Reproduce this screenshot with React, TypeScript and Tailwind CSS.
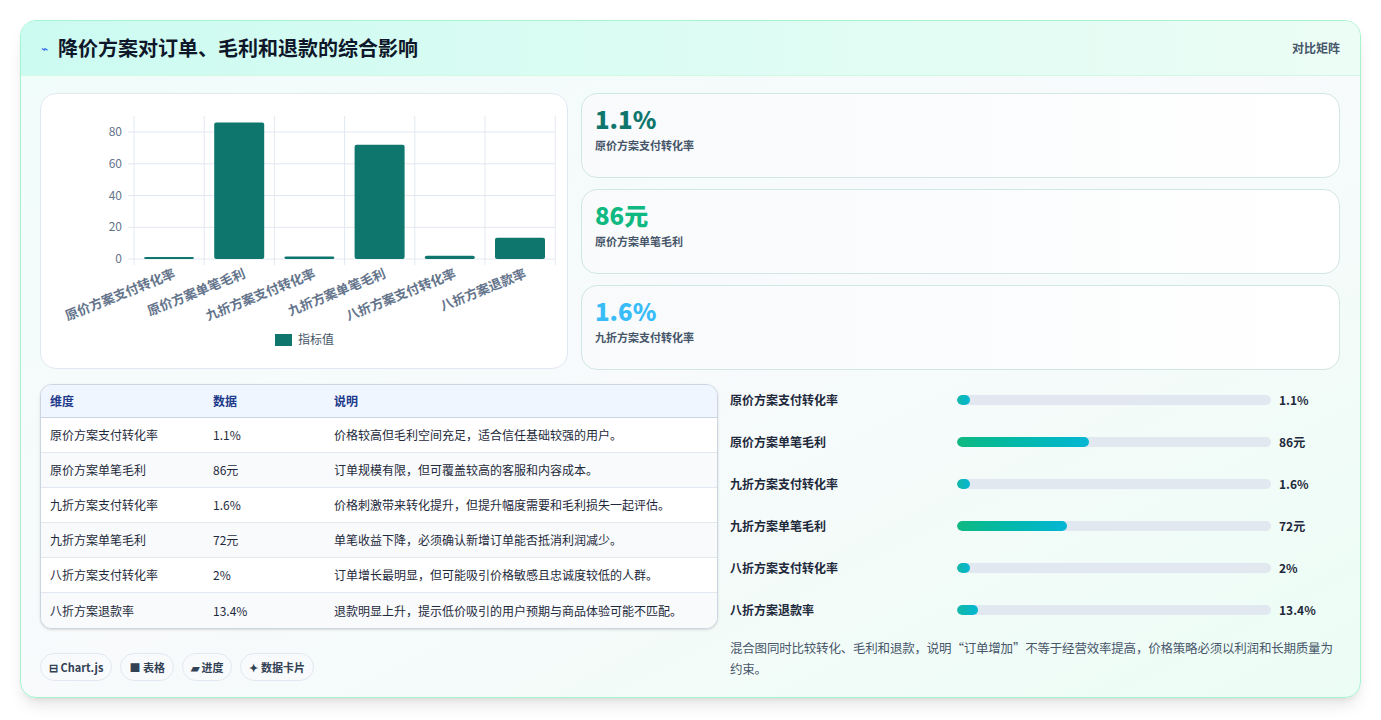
import React from "react";

const rows = [
  ["原价方案支付转化率", "1.1%", "价格较高但毛利空间充足，适合信任基础较强的用户。", 1.1],
  ["原价方案单笔毛利", "86元", "订单规模有限，但可覆盖较高的客服和内容成本。", 86],
  ["九折方案支付转化率", "1.6%", "价格刺激带来转化提升，但提升幅度需要和毛利损失一起评估。", 1.6],
  ["九折方案单笔毛利", "72元", "单笔收益下降，必须确认新增订单能否抵消利润减少。", 72],
  ["八折方案支付转化率", "2%", "订单增长最明显，但可能吸引价格敏感且忠诚度较低的人群。", 2],
  ["八折方案退款率", "13.4%", "退款明显上升，提示低价吸引的用户预期与商品体验可能不匹配。", 13.4],
] as const;

const font = { fontFamily: "'Noto Sans CJK SC', 'Noto Sans', sans-serif" };

function Chart() {
  const x0 = 93, y0 = 165, unit = 127 / 80, colW = 70.2;
  return (
    <svg width="527" height="275" viewBox="0 0 527 275" style={font}>
      {[0, 20, 40, 60, 80].map((v) => (
        <g key={v}>
          <line x1={x0 - 6} x2={514} y1={y0 - v * unit} y2={y0 - v * unit} stroke="#e2e8f0" />
          <text x={x0 - 12} y={y0 - v * unit + 4} textAnchor="end" fontSize="12" fill="#64748b">{v}</text>
        </g>
      ))}
      {Array.from({ length: 7 }).map((_, i) => (
        <line key={i} x1={x0 + i * colW} x2={x0 + i * colW} y1={22} y2={y0 + 6} stroke="#e2e8f0" />
      ))}
      {rows.map((r, i) => {
        const h = Math.max(r[3] * unit, 2);
        return (
          <g key={i}>
            <rect x={x0 + i * colW + 10} y={y0 - h} width={50} height={h} rx="2" fill="#0f766e" />
            <text transform={`translate(${x0 + i * colW + 42},${y0 + 18}) rotate(-22)`} textAnchor="end" fontSize="13" fontWeight="600" fill="#64748b">{r[0]}</text>
          </g>
        );
      })}
      <rect x="234" y="240" width="17" height="12" fill="#0f766e" />
      <text x="257" y="250" fontSize="12" fill="#475569">指标值</text>
    </svg>
  );
}

const stats = [
  ["1.1%", "原价方案支付转化率", "text-[#0f766e]"],
  ["86元", "原价方案单笔毛利", "text-[#10b981]"],
  ["1.6%", "九折方案支付转化率", "text-[#38bdf8]"],
];

export default function App() {
  return (
    <div className="min-h-[720px] bg-white p-5 pb-0" style={font}>
      <div className="rounded-2xl border border-[#a7f3d0] bg-gradient-to-br from-[#f0fdfa] via-[#f8fafc] to-[#ecfdf5] shadow-lg overflow-hidden h-[678px]">
        <div className="h-[55px] flex items-center justify-between px-5 bg-gradient-to-r from-[#ccfbf1] to-[#ecfdf5] border-b border-[#d1fae5]">
          <div className="flex items-center gap-[10px]">
            <span className="text-[#2563eb] text-xs">⌁</span>
            <span className="text-[20px] font-bold text-[#0f172a]">降价方案对订单、毛利和退款的综合影响</span>
          </div>
          <span className="text-xs font-semibold text-[#475569]">对比矩阵</span>
        </div>
        <div className="pl-[19px] pr-5 pt-[17px] flex gap-[13px]">
          <div className="w-[528px] h-[276px] rounded-2xl border border-[#e2e8f0] bg-white">
            <Chart />
          </div>
          <div className="flex-1 flex flex-col gap-[11px]">
            {stats.map((s) => (
              <div key={s[1]} className="h-[85px] rounded-2xl border border-[#d1e7e4] bg-gradient-to-r from-[#f8fafc] to-white px-[13px] pt-[9px]">
                <div className={`text-[24px] font-extrabold leading-8 ${s[2]}`}>{s[0]}</div>
                <div className="text-[11px] font-semibold text-[#475569] mt-[2px]">{s[1]}</div>
              </div>
            ))}
          </div>
        </div>
        <div className="pl-[19px] pr-5 pt-[14px] flex gap-[12px]">
          <div className="w-[678px]">
            <div className="rounded-xl border border-[#cbd5e1] overflow-hidden bg-white shadow-sm">
              <div className="grid grid-cols-[163px_121px_1fr] h-[33px] items-center bg-[#eff6ff] border-b border-[#cbd5e1] px-[9px] text-xs font-semibold text-[#1e3a8a]">
                <span>维度</span><span>数据</span><span>说明</span>
              </div>
              {rows.map((r, i) => (
                <div key={i} className={`grid grid-cols-[163px_121px_1fr] h-[35px] items-center px-[9px] text-xs text-[#1e293b] ${i < 5 ? "border-b border-[#e2e8f0]" : ""} ${i % 2 ? "bg-[#f8fafc]" : "bg-white"}`}>
                  <span>{r[0]}</span><span>{r[1]}</span><span>{r[2]}</span>
                </div>
              ))}
            </div>
            <div className="flex gap-2 mt-6">
              {["⊟ Chart.js", "■ 表格", "▰ 进度", "✦ 数据卡片"].map((b) => (
                <span key={b} className="h-[28px] px-[8px] rounded-full border border-[#e2e8f0] bg-[#f8fafc] text-[11px] font-semibold text-[#334155] flex items-center">{b}</span>
              ))}
            </div>
          </div>
          <div className="flex-1 -mt-[5px]">
            {rows.map((r, i) => {
              const pct = Math.max((r[3] / 205) * 100, 4.2);
              const gradient = r[3] > 50 ? "bg-gradient-to-r from-[#10b981] to-[#06b6d4]" : "bg-gradient-to-r from-[#14b8a6] to-[#06b6d4]";
              return (
                <div key={i} className="h-[42px] flex items-center">
                  <span className="w-[227px] text-xs font-semibold text-[#1e293b]">{r[0]}</span>
                  <div className="w-[314px] h-[10px] rounded-full bg-[#e2e8f0] overflow-hidden">
                    <div className={`h-full rounded-full ${gradient}`} style={{ width: `${pct}%` }} />
                  </div>
                  <span className="ml-2 text-xs font-bold text-[#1e293b]">{r[1]}</span>
                </div>
              );
            })}
            <p className="mt-[6px] text-[12.5px] leading-[21px] text-[#475569] tracking-[-0.2px]">混合图同时比较转化、毛利和退款，说明“订单增加”不等于经营效率提高，价格策略必须以利润和长期质量为约束。</p>
          </div>
        </div>
      </div>
    </div>
  );
}
